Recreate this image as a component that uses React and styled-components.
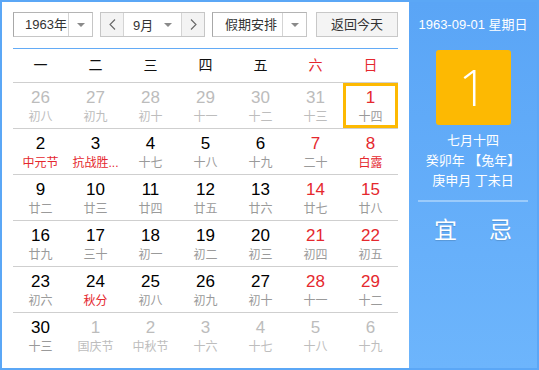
import styled, { createGlobalStyle } from 'styled-components';

const GlobalStyle = createGlobalStyle`
  html, body {
    margin: 0;
    padding: 0;
    background: #fff;
  }
  body {
    font-family: "Liberation Sans", "Noto Sans CJK SC", sans-serif;
  }
  * {
    box-sizing: border-box;
  }
`;

const weekdays = [
  { label: '一' }, { label: '二' }, { label: '三' }, { label: '四' },
  { label: '五' }, { label: '六', weekend: true }, { label: '日', weekend: true },
];

// kind: 'other' = day of another month, fest = red lunar text
const weeks = [
  [
    { d: 26, l: '初八', other: true }, { d: 27, l: '初九', other: true },
    { d: 28, l: '初十', other: true }, { d: 29, l: '十一', other: true },
    { d: 30, l: '十二', other: true }, { d: 31, l: '十三', other: true },
    { d: 1, l: '十四', selected: true },
  ],
  [
    { d: 2, l: '中元节', fest: true }, { d: 3, l: '抗战胜...', fest: true },
    { d: 4, l: '十七' }, { d: 5, l: '十八' }, { d: 6, l: '十九' },
    { d: 7, l: '二十' }, { d: 8, l: '白露', fest: true },
  ],
  [
    { d: 9, l: '廿二' }, { d: 10, l: '廿三' }, { d: 11, l: '廿四' },
    { d: 12, l: '廿五' }, { d: 13, l: '廿六' }, { d: 14, l: '廿七' },
    { d: 15, l: '廿八' },
  ],
  [
    { d: 16, l: '廿九' }, { d: 17, l: '三十' }, { d: 18, l: '初一' },
    { d: 19, l: '初二' }, { d: 20, l: '初三' }, { d: 21, l: '初四' },
    { d: 22, l: '初五' },
  ],
  [
    { d: 23, l: '初六' }, { d: 24, l: '秋分', fest: true }, { d: 25, l: '初八' },
    { d: 26, l: '初九' }, { d: 27, l: '初十' }, { d: 28, l: '十一' },
    { d: 29, l: '十二' },
  ],
  [
    { d: 30, l: '十三' }, { d: 1, l: '国庆节', other: true },
    { d: 2, l: '中秋节', other: true }, { d: 3, l: '十六', other: true },
    { d: 4, l: '十七', other: true }, { d: 5, l: '十八', other: true },
    { d: 6, l: '十九', other: true },
  ],
];

function Chevron({ dir }) {
  return (
    <svg width="7" height="11" viewBox="0 0 7 11">
      <polyline
        points={dir === 'left' ? '6,0.5 1,5.5 6,10.5' : '1,0.5 6,5.5 1,10.5'}
        fill="none"
        stroke="#666"
        strokeWidth="1.1"
      />
    </svg>
  );
}

export default function App() {
  return (
    <>
      <GlobalStyle />
      <Frame>
        <Main>
          <Toolbar>
            <Select width={80}>
              <SelectText pad={11}>1963年</SelectText>
              <ArrowCell><Caret /></ArrowCell>
            </Select>
            <MonthGroup>
              <StepButton><Chevron dir="left" /></StepButton>
              <MonthSelect>
                <span>9月</span>
                <Caret />
              </MonthSelect>
              <StepButton right><Chevron dir="right" /></StepButton>
            </MonthGroup>
            <Select width={95}>
              <SelectText pad={12}>假期安排</SelectText>
              <ArrowCell><Caret /></ArrowCell>
            </Select>
            <TodayButton>返回今天</TodayButton>
          </Toolbar>

          <Grid>
            <HeaderRow>
              {weekdays.map((w) => (
                <HeaderCell key={w.label} weekend={w.weekend}>{w.label}</HeaderCell>
              ))}
            </HeaderRow>
            {weeks.map((week, i) => (
              <WeekRow key={i} last={i === weeks.length - 1}>
                {week.map((day, j) => (
                  <DayCell key={j} selected={day.selected}>
                    <DayNum other={day.other} weekend={j >= 5}>{day.d}</DayNum>
                    <Lunar other={day.other} fest={day.fest}>{day.l}</Lunar>
                  </DayCell>
                ))}
              </WeekRow>
            ))}
          </Grid>
        </Main>

        <Side>
          <DateLine>1963-09-01 星期日</DateLine>
          <BigDay>1</BigDay>
          <InfoLines>
            <div>七月十四</div>
            <div>癸卯年 【兔年】</div>
            <div>庚申月 丁未日</div>
          </InfoLines>
          <Divider />
          <Advice>
            <span>宜</span>
            <span>忌</span>
          </Advice>
        </Side>
      </Frame>
    </>
  );
}

const Frame = styled.div`
  width: 539px;
  height: 370px;
  border: 2px solid #5ba7f6;
  display: flex;
  background: #fff;
`;

const Main = styled.div`
  width: 407px;
  padding: 10px 11px 0 11px;
  display: flex;
  flex-direction: column;
`;

const Toolbar = styled.div`
  display: flex;
  height: 25px;
  font-size: 13px;
  color: #333;
`;

const Select = styled.div`
  width: ${(p) => p.width}px;
  height: 25px;
  margin-right: 7px;
  border: 1px solid #c6c6c6;
  border-left-color: #a8a8a8;
  border-top-color: #b4b4b4;
  display: flex;
  background: #fff;
  &:nth-child(3) {
    margin-right: 9px;
  }
`;

const SelectText = styled.div`
  flex: 1;
  padding-left: ${(p) => p.pad}px;
  line-height: 23px;
  white-space: nowrap;
`;

const ArrowCell = styled.div`
  width: 24px;
  border-left: 1px solid #d4d4d4;
  display: flex;
  align-items: center;
  justify-content: center;
`;

const Caret = styled.span`
  display: inline-block;
  width: 0;
  height: 0;
  border-left: 4px solid transparent;
  border-right: 4px solid transparent;
  border-top: 4px solid #8a8a8a;
`;

const MonthGroup = styled.div`
  width: 105px;
  height: 25px;
  margin-right: 7px;
  border: 1px solid #c6c6c6;
  display: flex;
`;

const StepButton = styled.div`
  width: 23px;
  background: #f3f3f3;
  display: flex;
  align-items: center;
  justify-content: center;
  border-right: ${(p) => (p.right ? 'none' : '1px solid #d4d4d4')};
  border-left: ${(p) => (p.right ? '1px solid #d4d4d4' : 'none')};
`;

const MonthSelect = styled.div`
  flex: 1;
  display: flex;
  align-items: center;
  justify-content: space-between;
  padding: 0 9px 0 9px;
  background: #fff;
`;

const TodayButton = styled.div`
  width: 82px;
  height: 25px;
  border: 1px solid #c8c8c8;
  background: #f4f4f4;
  text-align: center;
  line-height: 23px;
`;

const Grid = styled.div`
  margin-top: 11px;
  border-top: 1px solid #63abf6;
  display: flex;
  flex-direction: column;
`;

const HeaderRow = styled.div`
  display: grid;
  grid-template-columns: repeat(7, 55px);
  height: 34px;
  border-bottom: 1px solid #cfcfcf;
`;

const HeaderCell = styled.div`
  text-align: center;
  line-height: 33px;
  font-size: 14px;
  color: ${(p) => (p.weekend ? '#e5282e' : '#111')};
`;

const WeekRow = styled.div`
  display: grid;
  grid-template-columns: repeat(7, 55px);
  height: 46px;
  border-bottom: ${(p) => (p.last ? 'none' : '1px solid #cfcfcf')};
`;

const DayCell = styled.div`
  height: 45px;
  padding-top: 5px;
  text-align: center;
  box-shadow: ${(p) => (p.selected ? 'inset 0 0 0 3px #fdb902' : 'none')};
`;

const DayNum = styled.div`
  font-size: 17px;
  line-height: 20px;
  color: ${(p) => (p.other ? '#bcbcbc' : p.weekend ? '#e5282e' : '#000')};
`;

const Lunar = styled.div`
  font-size: 12px;
  line-height: 18px;
  white-space: nowrap;
  color: ${(p) => (p.other ? '#bdbdbd' : p.fest ? '#e5282e' : '#9a9a9a')};
`;

const Side = styled.div`
  flex: 1;
  background: linear-gradient(#5aa5f6, #6db5fc);
  color: #fff;
  display: flex;
  flex-direction: column;
  align-items: center;
  padding-top: 14px;
`;

const DateLine = styled.div`
  font-size: 13px;
  line-height: 18px;
  white-space: nowrap;
`;

const BigDay = styled.div`
  margin-top: 16px;
  width: 75px;
  height: 75px;
  border-radius: 3px;
  background: #fdb902;
  font-size: 50px;
  line-height: 75px;
  text-align: center;
  font-family: "Open Sans", "Liberation Sans", sans-serif;
  font-weight: 300;
`;

const InfoLines = styled.div`
  margin-top: 6px;
  font-size: 13px;
  line-height: 20px;
  text-align: center;
  white-space: nowrap;
`;

const Divider = styled.div`
  margin-top: 9px;
  width: 110px;
  height: 2px;
  background: #9bcbfb;
`;

const Advice = styled.div`
  margin-top: 13px;
  display: flex;
  gap: 32px;
  font-size: 23px;
  line-height: 30px;
  text-shadow: 0 1px 1px rgba(0, 0, 0, 0.15);
`;
